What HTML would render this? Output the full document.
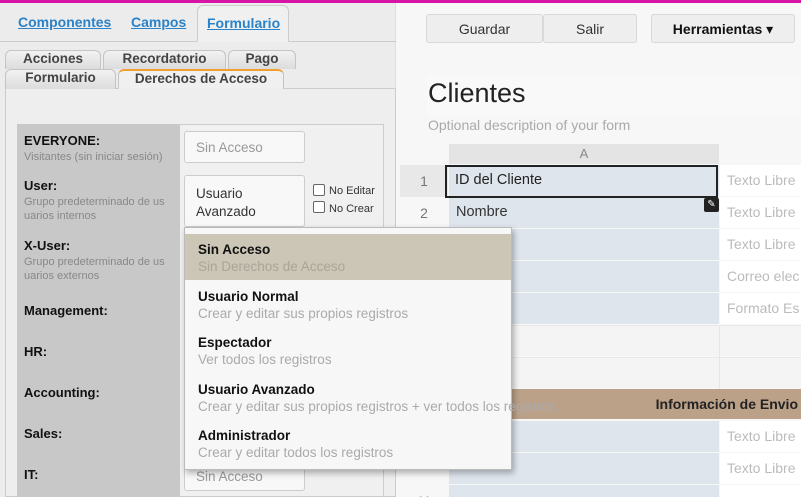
<!DOCTYPE html>
<html style="width:801px;height:497px;overflow:hidden"><head><meta charset="utf-8"><style>
*{margin:0;padding:0;box-sizing:border-box}
body{width:801px;height:497px;overflow:hidden;font-family:"Liberation Sans","DejaVu Sans",sans-serif;background:#f7f7f7;position:relative;font-size:13px;color:#222}
.a{position:absolute}
.top{left:0;top:0;width:801px;height:3px;background:#d814a8}
.left{left:0;top:3px;width:396px;height:494px;background:#ececec;border-right:1px solid #ddd}
.tl{color:#2a82c8;text-decoration:underline;font-weight:bold;font-size:14px}
.st{background:linear-gradient(#f2f2f2,#dcdcdc);border:1px solid #c4c4c4;border-bottom:none;border-radius:6px 6px 0 0;font-weight:bold;color:#444;text-align:center;font-size:13.5px}
.lab{font-weight:bold;font-size:13px;color:#111}
.sub{font-size:11px;color:#888;line-height:14px}
.inp{background:#f8f8f8;border:1px solid #ccc;border-radius:3px;color:#999;font-size:13.5px;padding-left:11px}
.dd{left:184px;top:227px;width:328px;height:243px;background:#f7f7f7;border:1px solid #bbb;box-shadow:2px 3px 6px rgba(0,0,0,.3)}
.it{position:absolute;left:0;width:326px;height:46px;padding:8px 0 0 13px}
.it b{display:block;font-size:13.5px;color:#111;line-height:16px}
.it span{display:block;font-size:13.5px;color:#aaa;line-height:18px;white-space:nowrap}
.btn{background:#eee;border:1px solid #d8d8d8;border-radius:3px;text-align:center;line-height:28px;font-size:14px;color:#333}
.rn{left:400px;width:48px;height:32px;text-align:center;color:#777;line-height:32px;font-size:14px}
.ca{left:449px;width:270px;height:31px;background:#dfe5ed}
.cb{left:720px;width:81px;height:31px;background:#fff;color:#bbb;font-size:14px;line-height:31px;padding-left:7px;white-space:nowrap;overflow:hidden}
.ce{left:449px;width:352px;height:31px;background:#f4f4f4;border-right:0}
</style></head><body>
<div class="a top"></div>
<div class="a left"></div>
<div class="a" style="left:0;top:41px;width:396px;height:1px;background:#ccc"></div>
<div class="a" style="left:197px;top:5px;width:92px;height:37px;background:#f0f0f0;border:1px solid #ccc;border-bottom:none;border-radius:6px 6px 0 0"></div>
<div class="a tl" style="left:18px;top:14px">Componentes</div>
<div class="a tl" style="left:131px;top:14px">Campos</div>
<div class="a tl" style="left:207px;top:15px">Formulario</div>
<div class="a st" style="left:5px;top:50px;width:96px;height:19px">Acciones</div>
<div class="a st" style="left:103px;top:50px;width:123px;height:19px">Recordatorio</div>
<div class="a st" style="left:228px;top:50px;width:68px;height:19px">Pago</div>
<div class="a" style="left:5px;top:88px;width:391px;height:409px;border:1px solid #ccc;background:#eeeeee"></div>
<div class="a st" style="left:5px;top:69px;width:111px;height:20px">Formulario</div>
<div class="a st" style="left:118px;top:69px;width:166px;height:20px;background:#f0f0f0;border-top:2px solid #f0a030">Derechos de Acceso</div>
<div class="a" style="left:17px;top:124px;width:367px;height:373px;background:#f0f0f0;border:1px solid #ccc"></div>
<div class="a" style="left:17px;top:124px;width:163px;height:373px;background:#c8c8c8"></div>
<div class="a lab" style="left:24px;top:133px">EVERYONE:</div>
<div class="a sub" style="left:24px;top:150px">Visitantes (sin iniciar sesión)</div>
<div class="a lab" style="left:24px;top:178px">User:</div>
<div class="a sub" style="left:24px;top:195px">Grupo predeterminado de us<br>uarios internos</div>
<div class="a lab" style="left:24px;top:238px">X-User:</div>
<div class="a sub" style="left:24px;top:255px">Grupo predeterminado de us<br>uarios externos</div>
<div class="a lab" style="left:24px;top:303px">Management:</div>
<div class="a lab" style="left:24px;top:344px">HR:</div>
<div class="a lab" style="left:24px;top:385px">Accounting:</div>
<div class="a lab" style="left:24px;top:426px">Sales:</div>
<div class="a lab" style="left:24px;top:467px">IT:</div>
<div class="a inp" style="left:184px;top:131px;width:121px;height:32px;line-height:32px">Sin Acceso</div>
<div class="a inp" style="left:184px;top:175px;width:121px;height:52px;color:#333;padding-top:9px;line-height:18px">Usuario<br>Avanzado</div>
<div class="a inp" style="left:184px;top:463px;width:121px;height:28px;line-height:26px">Sin Acceso</div>
<div class="a" style="left:313px;top:184px;width:12px;height:12px;border:1px solid #666;border-radius:2px;background:#fff"></div>
<div class="a" style="left:313px;top:201px;width:12px;height:12px;border:1px solid #666;border-radius:2px;background:#fff"></div>
<div class="a" style="left:329px;top:185px;font-size:11px;color:#333">No Editar</div>
<div class="a" style="left:329px;top:203px;font-size:11px;color:#333">No Crear</div>
<!-- right -->
<div class="a btn" style="left:426px;top:14px;width:117px;height:29px">Guardar</div>
<div class="a btn" style="left:543px;top:14px;width:94px;height:29px">Salir</div>
<div class="a btn" style="left:651px;top:14px;width:144px;height:29px;font-weight:bold;color:#111">Herramientas ▾</div>
<div class="a" style="left:427px;top:75px;width:374px;height:40px;background:#f9f9f9"></div>
<div class="a" style="left:428px;top:78px;font-size:27px;color:#222">Clientes</div>
<div class="a" style="left:428px;top:117px;font-size:14px;color:#aaa">Optional description of your form</div>
<div class="a" style="left:449px;top:144px;width:270px;height:20px;background:#e4e4e4;text-align:center;color:#888;font-size:13px;line-height:20px">A</div>
<div class="a" style="left:400px;top:165px;width:48px;height:32px;background:#e8e8e8"></div>
<div class="a rn" style="top:165px">1</div><div class="a rn" style="top:197px">2</div>
<div class="a rn" style="top:485px">11</div>
<div class="a ca" style="top:165px"></div><div class="a ca" style="top:197px"></div><div class="a ca" style="top:229px"></div><div class="a ca" style="top:261px"></div><div class="a ca" style="top:293px"></div>
<div class="a ca" style="top:421px"></div><div class="a ca" style="top:453px"></div><div class="a ca" style="top:485px;height:12px"></div>
<div class="a ce" style="top:325px;border-top:1px solid #e8e8e8"></div>
<div class="a ce" style="top:357px;border-top:1px solid #e8e8e8"></div>
<div class="a" style="left:719px;top:325px;width:1px;height:64px;background:#e6e6e6"></div>
<div class="a" style="left:445px;top:165px;width:273px;height:33px;border:2px solid #222"></div>
<div class="a" style="left:455px;top:172px;font-size:14.5px;color:#222">ID del Cliente</div>
<div class="a" style="left:456px;top:204px;font-size:14.5px;color:#333">Nombre</div>
<div class="a" style="left:704px;top:198px;width:15px;height:14px;background:#222;border-radius:2px;color:#fff;font-size:10px;text-align:center;line-height:14px">✎</div>
<div class="a cb" style="top:165px">Texto Libre</div><div class="a cb" style="top:197px">Texto Libre</div><div class="a cb" style="top:229px">Texto Libre</div><div class="a cb" style="top:261px">Correo elec</div><div class="a cb" style="top:293px">Formato Es</div>
<div class="a cb" style="top:421px">Texto Libre</div><div class="a cb" style="top:453px">Texto Libre</div><div class="a cb" style="top:485px;height:12px"></div>
<div class="a" style="left:449px;top:389px;width:352px;height:30px;background:#bca189;text-align:right;padding-right:3px;font-weight:bold;font-size:14px;line-height:30px;color:#222">Información de Envio</div>
<!-- dropdown -->
<div class="a dd">
<div class="it" style="top:6px;background:#cbc6b5"><b>Sin Acceso</b><span style="color:#a9a598">Sin Derechos de Acceso</span></div>
<div class="it" style="top:53px"><b>Usuario Normal</b><span>Crear y editar sus propios registros</span></div>
<div class="it" style="top:99px"><b>Espectador</b><span>Ver todos los registros</span></div>
<div class="it" style="top:146px"><b>Usuario Avanzado</b><span>Crear y editar sus propios registros + ver todos los registros</span></div>
<div class="it" style="top:192px"><b>Administrador</b><span>Crear y editar todos los registros</span></div>
</div>
</body></html>
